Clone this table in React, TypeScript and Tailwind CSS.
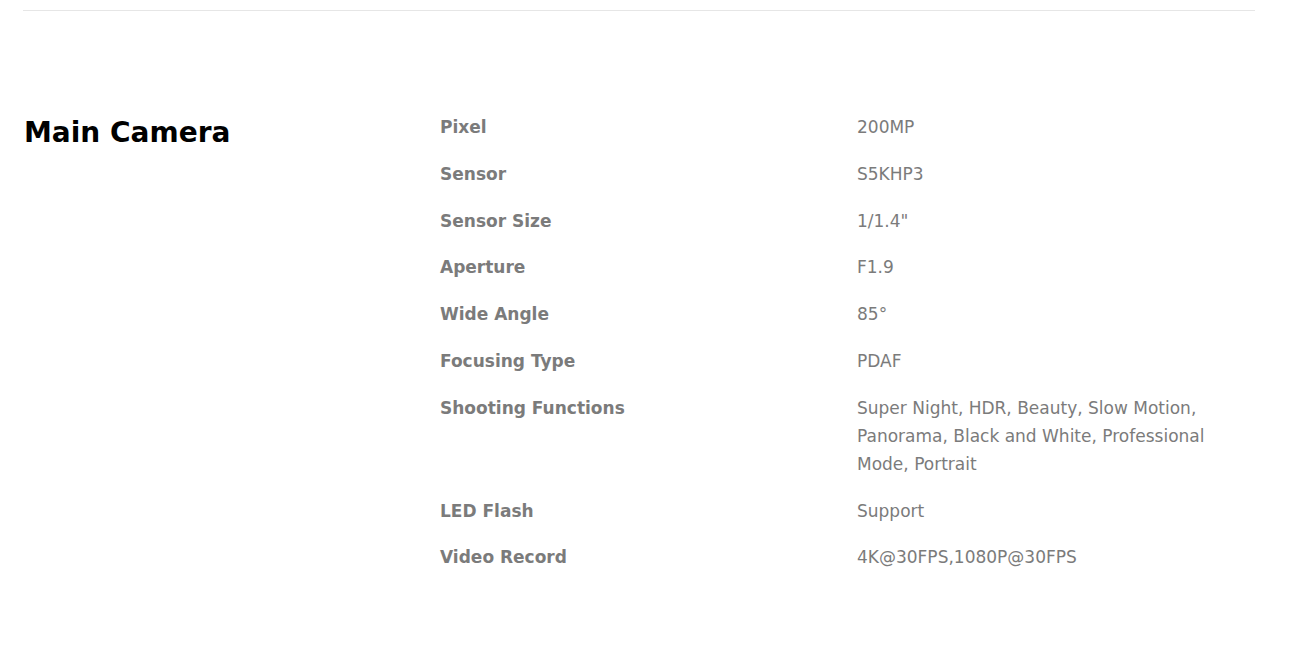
const specs: { label: string; value: string }[] = [
  { label: "Pixel", value: "200MP" },
  { label: "Sensor", value: "S5KHP3" },
  { label: "Sensor Size", value: '1/1.4"' },
  { label: "Aperture", value: "F1.9" },
  { label: "Wide Angle", value: "85°" },
  { label: "Focusing Type", value: "PDAF" },
  {
    label: "Shooting Functions",
    value:
      "Super Night, HDR, Beauty, Slow Motion, Panorama, Black and White, Professional Mode, Portrait",
  },
  { label: "LED Flash", value: "Support" },
  { label: "Video Record", value: "4K@30FPS,1080P@30FPS" },
];

export default function App() {
  return (
    <div className="min-h-[652px] bg-white pt-[10px] pl-[23px] font-['DejaVu_Sans',sans-serif]">
      <div className="w-[1232px] border-t border-[#e6e6e6] pt-[102px]">
        <div className="grid grid-cols-[417px_417px_1fr]">
          <h2 className="pl-px text-[28px] font-bold leading-[40px] text-black">
            Main Camera
          </h2>
          <div className="col-span-2 flex flex-col gap-[18.8px]">
            {specs.map((item) => (
              <div key={item.label} className="grid grid-cols-[417px_1fr]">
                <span className="text-[17px] font-bold leading-[28px] text-[#7b7b7b]">
                  {item.label}
                </span>
                <span className="max-w-[370px] text-[17px] leading-[28px] text-[#7b7b7b]">
                  {item.value}
                </span>
              </div>
            ))}
          </div>
        </div>
      </div>
    </div>
  );
}
